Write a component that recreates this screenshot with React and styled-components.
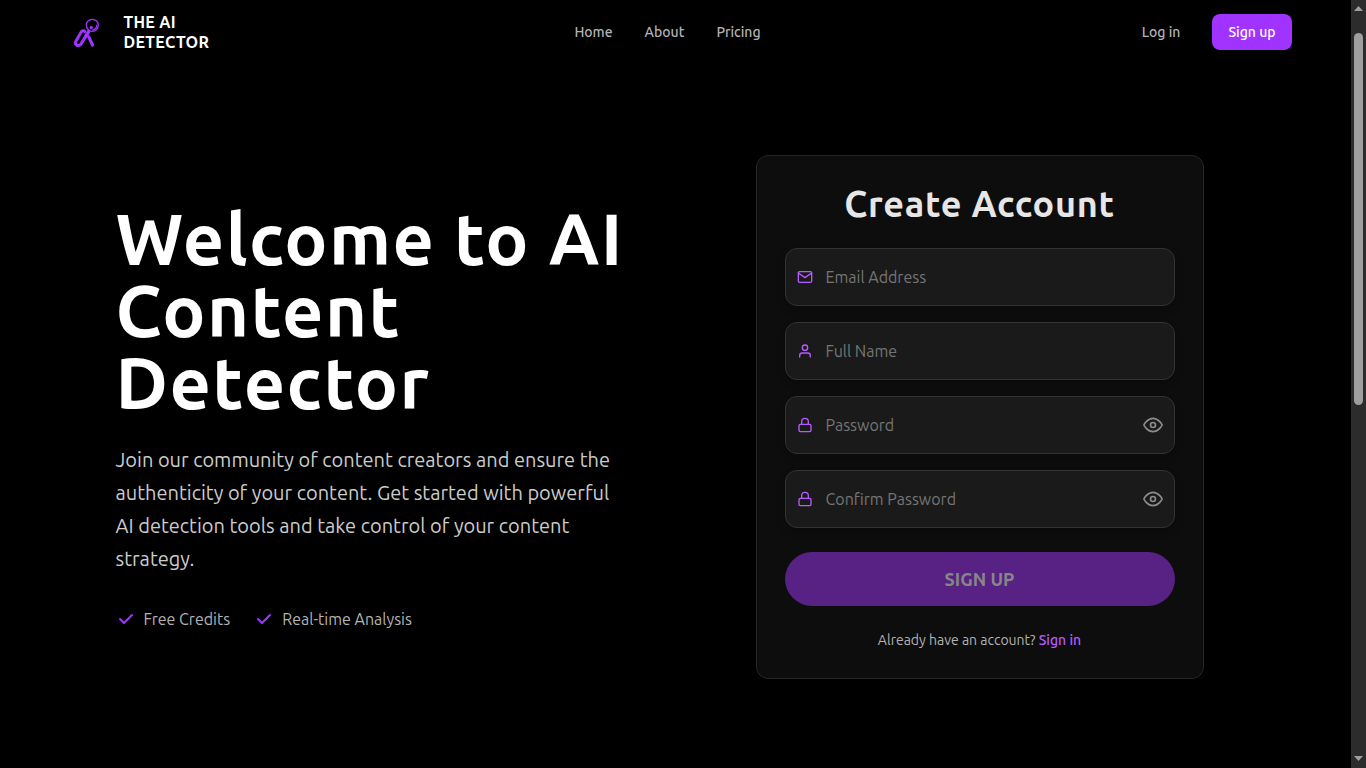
import React from "react";
import styled, { createGlobalStyle } from "styled-components";
import { FiMail, FiUser, FiLock, FiEye } from "react-icons/fi";

const purple = "#a033ff";
const violet = "#b65cff";

const GlobalStyle = createGlobalStyle`
  *, *::before, *::after { box-sizing: border-box; }
  body {
    margin: 0;
    background: #000;
    color: #fff;
    font-family: Ubuntu, "Open Sans", sans-serif;
  }
  h1, h2, p, ul { margin: 0; padding: 0; }
  button, input { font: inherit; }
  a { color: inherit; text-decoration: none; }
`;

const Shell = styled.div`
  display: flex;
  height: 100vh;
  overflow: hidden;
`;

const Page = styled.div`
  flex: 1;
  min-width: 0;
  display: flex;
  flex-direction: column;
`;

const Header = styled.header`
  width: 100%;
  max-width: 1280px;
  height: 64px;
  margin: 0 auto;
  padding: 0 24px;
  display: grid;
  grid-template-columns: 1fr auto 1fr;
  align-items: center;
`;

const Brand = styled.a`
  display: flex;
  align-items: center;
  gap: 16px;
  font-size: 16px;
  line-height: 20px;
  font-weight: 600;
  letter-spacing: 0.02em;
`;

const Nav = styled.nav`
  display: flex;
  gap: 32px;
  padding-right: 16px;
`;

const NavLink = styled.a`
  font-size: 14px;
  line-height: 20px;
  font-weight: 500;
  color: #b3b3b3;
`;

const Account = styled.div`
  display: flex;
  align-items: center;
  justify-content: flex-end;
  gap: 32px;
`;

const SmallButton = styled.button`
  height: 36px;
  padding: 0 16px;
  border: 0;
  border-radius: 8px;
  background: ${purple};
  color: #fff;
  font-size: 14px;
  line-height: 20px;
  font-weight: 500;
`;

const Hero = styled.main`
  flex: 1;
  width: 100%;
  max-width: 1120px;
  margin: 0 auto;
  padding-top: 2px;
  display: grid;
  grid-template-columns: 1fr 1fr;
  gap: 96px;
  align-items: center;
`;

const Title = styled.h1`
  font-size: 72px;
  line-height: 72px;
  font-weight: 600;
  letter-spacing: 0.02em;
`;

const Lead = styled.p`
  margin-top: 24px;
  font-size: 20px;
  line-height: 33px;
  color: #ccc;
`;

const Features = styled.ul`
  display: flex;
  gap: 24px;
  margin-top: 32px;
  list-style: none;
`;

const Feature = styled.li`
  display: flex;
  align-items: center;
  gap: 8px;
  font-size: 16px;
  line-height: 24px;
  color: #b3b3b3;

  svg { fill: ${purple}; }
`;

const Card = styled.form`
  width: 100%;
  max-width: 448px;
  justify-self: center;
  padding: 28px;
  border: 1px solid #262626;
  border-radius: 12px;
  background: #0d0d0d;
`;

const CardTitle = styled.h2`
  margin-bottom: 24px;
  font-size: 36px;
  line-height: 40px;
  font-weight: 600;
  letter-spacing: 0.02em;
  text-align: center;
  color: #e6e6e6;
`;

const Fields = styled.div`
  display: flex;
  flex-direction: column;
  gap: 16px;
`;

const FieldBox = styled.label`
  display: flex;
  align-items: center;
  gap: 13px;
  height: 58px;
  padding: 0 11px;
  border: 1px solid #333;
  border-radius: 12px;
  background: #1a1a1a;
  box-shadow: 0 4px 8px rgba(0, 0, 0, 0.2);

  > svg { flex: none; color: ${violet}; }
`;

const TextInput = styled.input`
  flex: 1;
  min-width: 0;
  padding: 0;
  border: 0;
  outline: 0;
  background: transparent;
  color: #fff;
  font-size: 16px;
  line-height: 24px;

  &::placeholder { color: #757575; opacity: 1; }
`;

const RevealButton = styled.button`
  display: flex;
  padding: 0;
  border: 0;
  background: transparent;
  color: #8c8c8c;
`;

const SubmitButton = styled.button`
  width: 100%;
  height: 54px;
  margin: 24px 0;
  border: 0;
  border-radius: 27px;
  background: #572284;
  color: #878787;
  font-size: 18px;
  line-height: 28px;
  font-weight: 600;
`;

const SignInLine = styled.p`
  font-size: 14px;
  line-height: 20px;
  text-align: center;
  color: #b3b3b3;

  a { color: ${violet}; font-weight: 500; }
`;

const ScrollTrack = styled.div`
  flex: none;
  width: 15px;
  display: flex;
  flex-direction: column;
  align-items: center;
  justify-content: space-between;
  padding: 6px 0 7px;
  background: #2c2c2c;
`;

const ScrollRail = styled.div`
  flex: 1;
  width: 9px;
  padding: 22px 0;
`;

const ScrollThumb = styled.div`
  height: 53%;
  border-radius: 5px;
  background: #9f9f9f;
`;

const Arrow = styled.svg`
  display: block;
  width: 9px;
  height: 5px;
  fill: #9f9f9f;
`;

function Logo() {
  return (
    <svg width="48" height="48" viewBox="0 0 48 48" fill="none" stroke={purple} strokeLinecap="round" strokeLinejoin="round" aria-hidden="true">
      <circle cx="32.3" cy="17.3" r="6" strokeWidth="1.3" />
      <path d="M36.8 17a5 5 0 0 1-4.3 5" strokeWidth="1.2" />
      <circle cx="31.3" cy="19.6" r="1.7" fill={purple} stroke="none" />
      <path d="M28.6 23.6 21.2 35.6c-1 1.7-2.9 2.4-4.4 1.5s-1.8-2.5-.8-4.2l5.2-8.8c1-1.6 2.8-1.7 3.6-.6" strokeWidth="3" />
      <path d="M28.6 23.6 25.4 29" strokeWidth="3.4" />
      <path d="M28.8 28.8l3.7 8.2" strokeWidth="3.2" />
    </svg>
  );
}

function CheckIcon() {
  return (
    <svg width="20" height="20" viewBox="0 0 20 20" aria-hidden="true">
      <path
        fillRule="evenodd"
        clipRule="evenodd"
        d="M16.707 5.293a1 1 0 010 1.414l-8 8a1 1 0 01-1.414 0l-4-4a1 1 0 011.414-1.414L8 12.586l7.293-7.293a1 1 0 011.414 0z"
      />
    </svg>
  );
}

function Field({ icon: Icon, label, type = "text", reveal }) {
  return (
    <FieldBox>
      <Icon size={16} />
      <TextInput type={type} placeholder={label} aria-label={label} />
      {reveal && (
        <RevealButton type="button" aria-label={`Show ${label}`}>
          <FiEye size={20} />
        </RevealButton>
      )}
    </FieldBox>
  );
}

export default function App() {
  return (
    <Shell>
      <GlobalStyle />
      <Page>
        <Header>
          <Brand href="#home">
            <Logo />
            <span>THE AI<br />DETECTOR</span>
          </Brand>
          <Nav>
            <NavLink href="#home">Home</NavLink>
            <NavLink href="#about">About</NavLink>
            <NavLink href="#pricing">Pricing</NavLink>
          </Nav>
          <Account>
            <NavLink href="#login">Log in</NavLink>
            <SmallButton type="button">Sign up</SmallButton>
          </Account>
        </Header>
        <Hero>
          <section>
            <Title>Welcome to AI Content Detector</Title>
            <Lead>
              Join our community of content creators and ensure the
              authenticity of your content. Get started with powerful
              AI detection tools and take control of your content
              strategy.
            </Lead>
            <Features>
              <Feature><CheckIcon />Free Credits</Feature>
              <Feature><CheckIcon />Real-time Analysis</Feature>
            </Features>
          </section>
          <Card>
            <CardTitle>Create Account</CardTitle>
            <Fields>
              <Field icon={FiMail} label="Email Address" type="email" />
              <Field icon={FiUser} label="Full Name" />
              <Field icon={FiLock} label="Password" type="password" reveal />
              <Field icon={FiLock} label="Confirm Password" type="password" reveal />
            </Fields>
            <SubmitButton type="submit" disabled>SIGN UP</SubmitButton>
            <SignInLine>
              Already have an account? <a href="#signin">Sign in</a>
            </SignInLine>
          </Card>
        </Hero>
      </Page>
      <ScrollTrack aria-hidden="true">
        <Arrow viewBox="0 0 9 5"><path d="M0 5 4.5 0 9 5z" /></Arrow>
        <ScrollRail><ScrollThumb /></ScrollRail>
        <Arrow viewBox="0 0 9 5"><path d="M0 0 4.5 5 9 0z" /></Arrow>
      </ScrollTrack>
    </Shell>
  );
}
